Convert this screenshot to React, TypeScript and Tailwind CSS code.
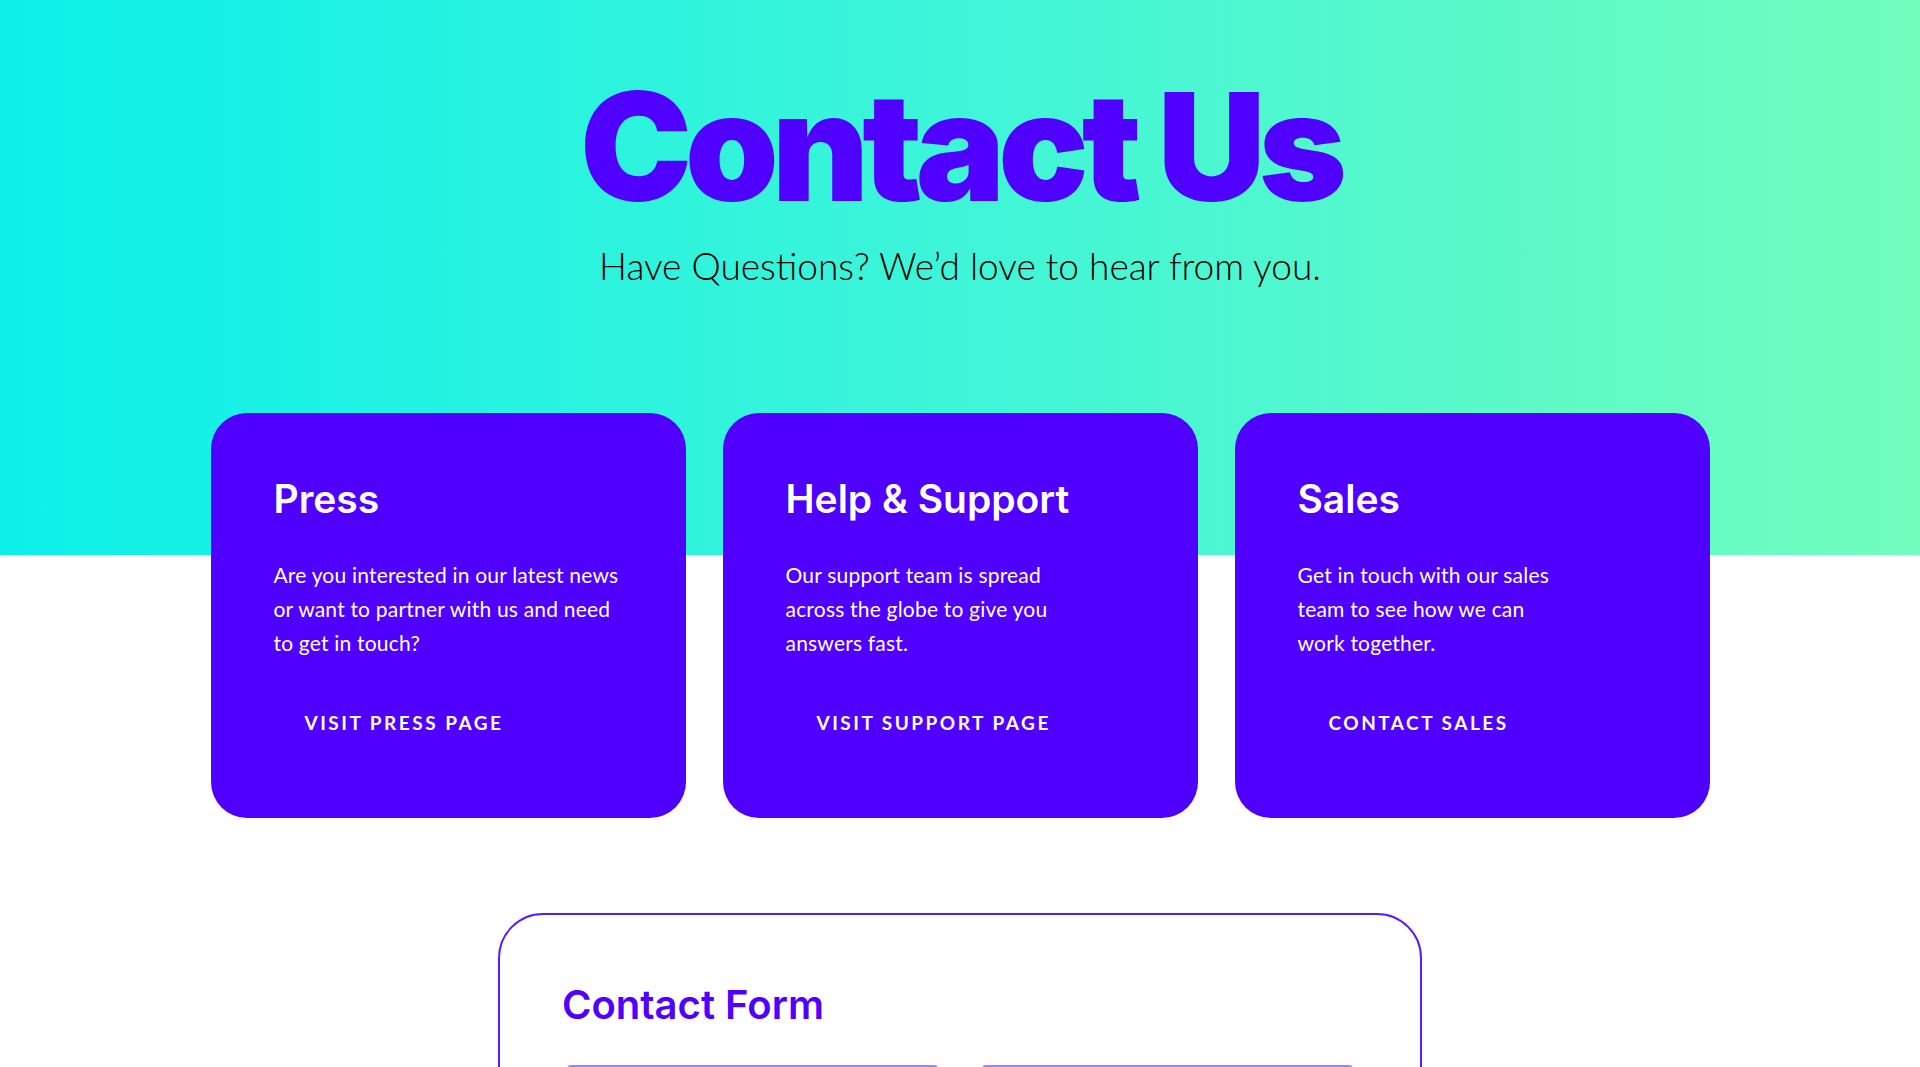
import { useState } from "react";

const cards = [
  {
    title: "Press",
    lines: [
      "Are you interested in our latest news",
      "or want to partner with us and need",
      "to get in touch?",
    ],
    cta: "Visit Press Page",
  },
  {
    title: "Help & Support",
    lines: [
      "Our support team is spread",
      "across the globe to give you",
      "answers fast.",
    ],
    cta: "Visit Support Page",
  },
  {
    title: "Sales",
    lines: [
      "Get in touch with our sales",
      "team to see how we can",
      "work together.",
    ],
    cta: "Contact Sales",
  },
];

function InfoCard({ title, lines, cta }: { title: string; lines: string[]; cta: string }) {
  return (
    <div className="flex flex-col items-start rounded-[36px] bg-[#5000ff] px-[63px] pt-[63px] pb-[67px] text-white">
      <h2 className="font-['Inter',sans-serif] text-[39px] font-semibold leading-[1.2] tracking-[0px]">
        {title}
      </h2>
      <p className="mt-[35px] font-['Lato',sans-serif] text-[21px] leading-[34px] tracking-[0.2px]">
        {lines.map((line, i) => (
          <span key={i}>
            {line}
            {i < lines.length - 1 && <br />}
          </span>
        ))}
      </p>
      <button
        type="button"
        className="mt-[35px] px-[31px] py-[16px] font-['Lato',sans-serif] text-[19px] font-bold uppercase leading-[24px] tracking-[2.5px]"
      >
        {cta}
      </button>
    </div>
  );
}

export default function App() {
  const [form, setForm] = useState({ name: "", email: "", subject: "", message: "" });

  return (
    <div className="min-h-screen bg-white bg-[linear-gradient(90deg,#0cf0e9_0%,#3ef5d8_50%,#71fdbc_100%)] bg-[length:100%_555px] bg-no-repeat">
      {/* Hero */}
      <header className="flex flex-col items-center pt-[72px]">
        <h1 className="font-['Inter',sans-serif] text-[150px] font-black leading-none tracking-[-7px] text-[#5000ff]">
          Contact Us
        </h1>
        <p className="mt-[22px] font-['Lato',sans-serif] text-[37px] font-light leading-[1.2] text-black">
          Have Questions? We’d love to hear from you.
        </p>
      </header>

      {/* Cards */}
      <section className="mx-auto mt-[125px] grid w-[1499px] grid-cols-3 gap-[37px]">
        {cards.map((card) => (
          <InfoCard key={card.title} {...card} />
        ))}
      </section>

      {/* Contact form */}
      <section className="mx-auto mt-[95px] mb-[80px] w-[924px] rounded-[45px] border-2 border-[#5a1cff] pt-[66px] pb-[70px]">
        <h2 className="px-[62px] font-['Inter',sans-serif] text-[40px] font-semibold leading-[1.2] tracking-[0px] text-[#5000ff]">
          Contact Form
        </h2>
        <form className="mt-[36px] grid grid-cols-2 gap-x-[44px] gap-y-[28px] px-[67px]">
          <input
            aria-label="Name"
            value={form.name}
            onChange={(e) => setForm({ ...form, name: e.target.value })}
            className="h-[58px] rounded-[4px] border-2 border-[#a57df6] px-4 font-['Lato',sans-serif] text-[18px] outline-none"
          />
          <input
            aria-label="Email"
            value={form.email}
            onChange={(e) => setForm({ ...form, email: e.target.value })}
            className="h-[58px] rounded-[4px] border-2 border-[#a57df6] px-4 font-['Lato',sans-serif] text-[18px] outline-none"
          />
          <input
            aria-label="Subject"
            value={form.subject}
            onChange={(e) => setForm({ ...form, subject: e.target.value })}
            className="col-span-2 h-[58px] rounded-[4px] border-2 border-[#a57df6] px-4 font-['Lato',sans-serif] text-[18px] outline-none"
          />
          <textarea
            aria-label="Message"
            value={form.message}
            onChange={(e) => setForm({ ...form, message: e.target.value })}
            className="col-span-2 h-[160px] rounded-[4px] border-2 border-[#a57df6] px-4 py-3 font-['Lato',sans-serif] text-[18px] outline-none"
          />
          <button
            type="button"
            className="col-span-2 justify-self-start rounded-full bg-[#5000ff] px-10 py-4 font-['Lato',sans-serif] text-[18px] font-bold uppercase tracking-[2px] text-white"
          >
            Send Message
          </button>
        </form>
      </section>
    </div>
  );
}
